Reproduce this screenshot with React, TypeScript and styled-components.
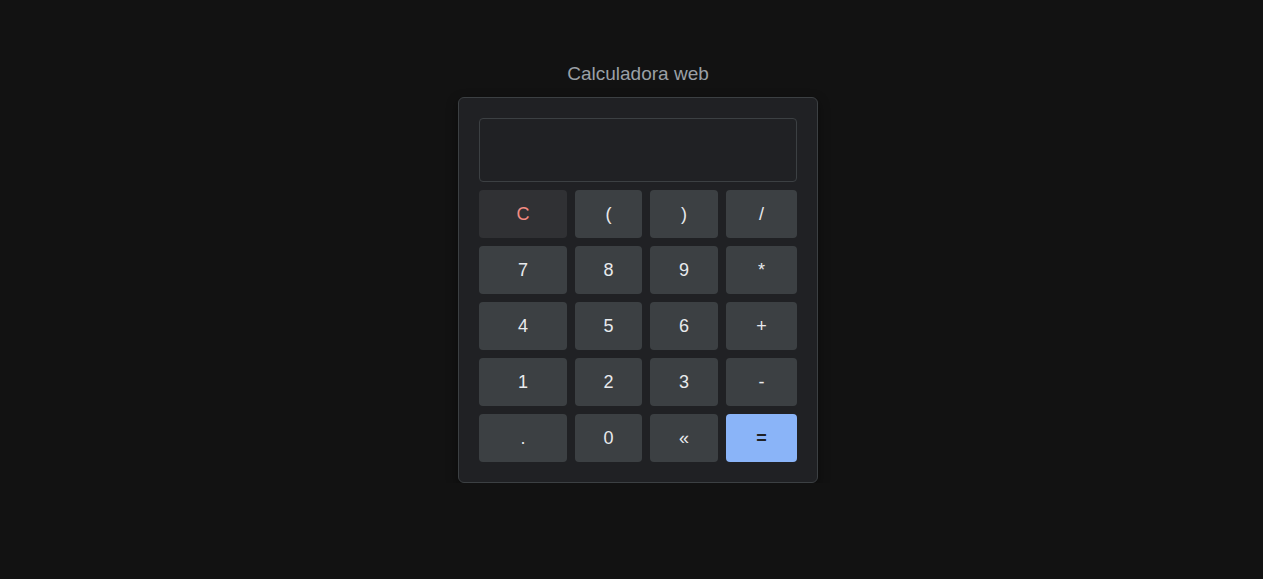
import { createGlobalStyle, styled } from "styled-components";

const GlobalStyle = createGlobalStyle`
  html, body {
    margin: 0;
    padding: 0;
    background: #121212;
    font-family: "Liberation Sans", Arial, sans-serif;
  }
`;

const Page = styled.main`
  display: flex;
  flex-direction: column;
  align-items: center;
  padding: 62px 0 0 13px;
`;

const Title = styled.h1`
  margin: 0 0 11px;
  font-size: 19px;
  font-weight: 400;
  line-height: 24px;
  color: #9aa0a6;
`;

const Card = styled.div`
  background: #202124;
  border: 1px solid #3c4043;
  border-radius: 6px;
  padding: 20px;
  box-shadow: 0 4px 12px rgba(0, 0, 0, 0.4);
  display: flex;
  flex-direction: column;
  gap: 8px;
`;

const Display = styled.div`
  height: 62px;
  border: 1px solid #3c4043;
  border-radius: 4px;
  background: #202124;
  color: #e8eaed;
  font-size: 24px;
  display: flex;
  align-items: center;
  justify-content: flex-end;
  padding: 0 12px;
`;

const Keys = styled.div`
  display: grid;
  grid-template-columns: 88px 67px 68px 71px;
  grid-auto-rows: 48px;
  gap: 8px;
`;

type Variant = "clear" | "normal" | "equals";

const Key = styled.button<{ $variant: Variant }>`
  border: none;
  border-radius: 4px;
  font-family: inherit;
  font-size: 18px;
  cursor: pointer;
  background: ${(p) =>
    p.$variant === "clear" ? "#303134" : p.$variant === "equals" ? "#8ab4f8" : "#3c4043"};
  color: ${(p) =>
    p.$variant === "clear" ? "#f28b82" : p.$variant === "equals" ? "#202124" : "#e8eaed"};
  font-weight: ${(p) => (p.$variant === "equals" ? 700 : 400)};
`;

const keys = ["C", "(", ")", "/", "7", "8", "9", "*", "4", "5", "6", "+", "1", "2", "3", "-", ".", "0", "«", "="];

function App() {
  return (
    <>
      <GlobalStyle />
      <Page>
        <Title>Calculadora web</Title>
        <Card>
          <Display />
          <Keys>
            {keys.map((k) => (
              <Key key={k} $variant={k === "C" ? "clear" : k === "=" ? "equals" : "normal"}>
                {k}
              </Key>
            ))}
          </Keys>
        </Card>
      </Page>
    </>
  );
}

export default App;
